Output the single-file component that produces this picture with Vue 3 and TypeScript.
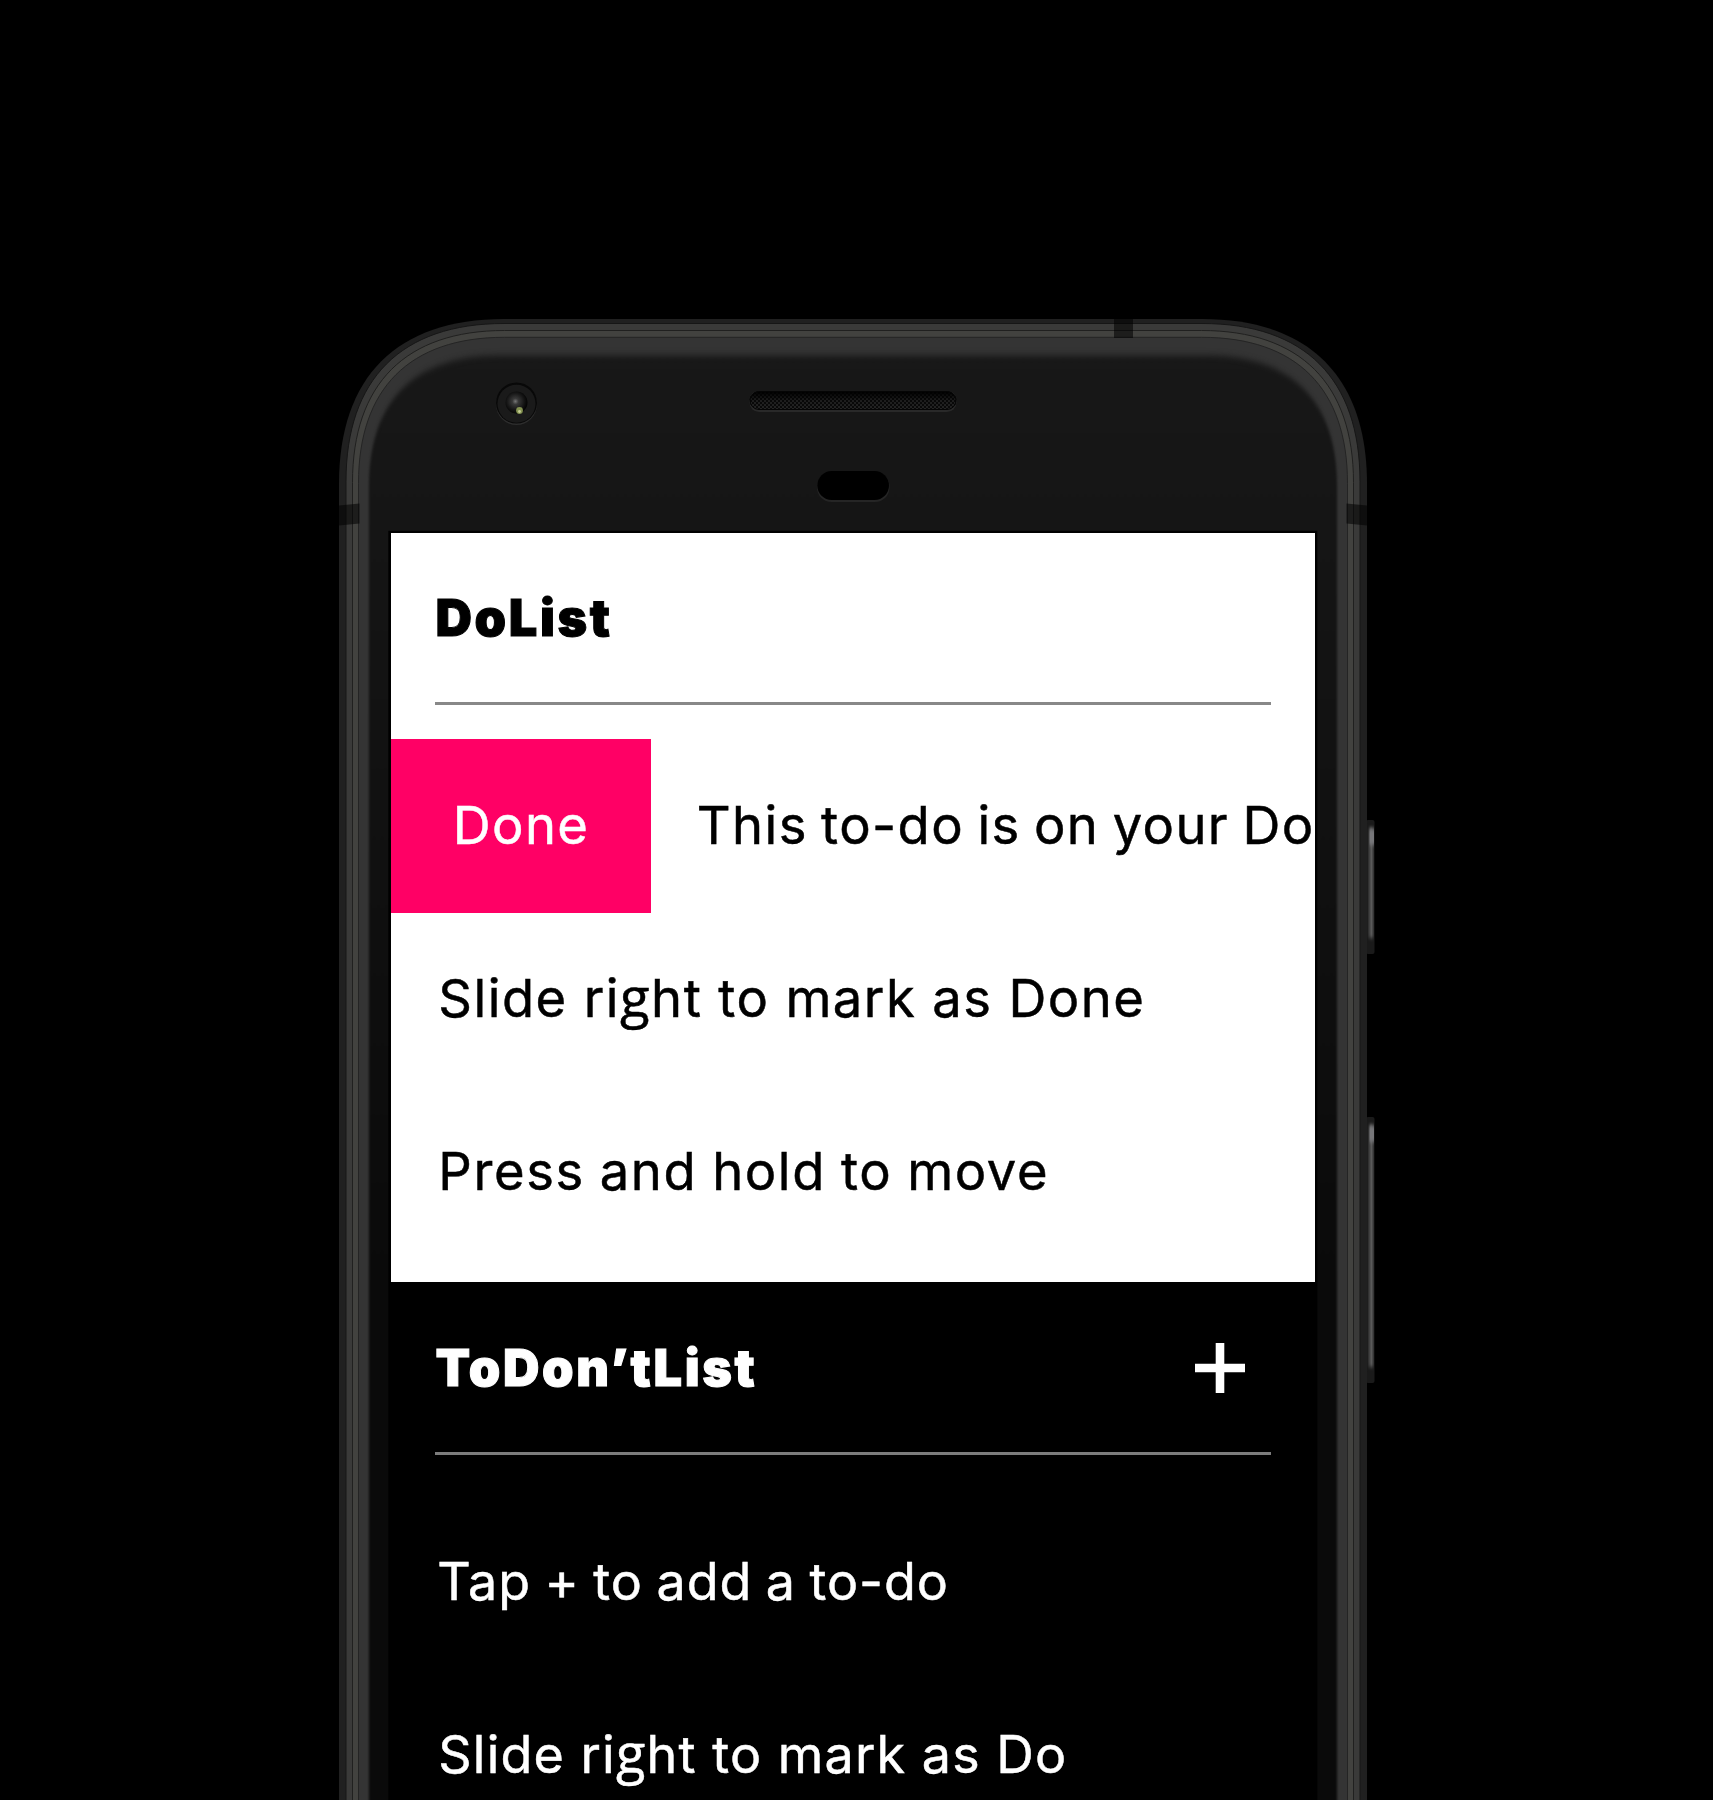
<script setup lang="ts">
interface Todo {
  text: string
  spacing: number
  wordGap: number
  action?: string
}

const doItems: Todo[] = [
  { text: 'This to-do is on your Do', spacing: 1.4, wordGap: -2.8, action: 'Done' },
  { text: 'Slide right to mark as Done', spacing: 1.5, wordGap: -0.3 },
  { text: 'Press and hold to move', spacing: 1.6, wordGap: -1.4 },
]

const dontItems: Todo[] = [
  { text: 'Tap + to add a to-do', spacing: 1, wordGap: -2.2 },
  { text: 'Slide right to mark as Do', spacing: 1.2, wordGap: -0.3 },
]

// The two-storey g comes from a companion face, so lines are split around it.
const pieces = (text: string): string[] => text.split(/(g)/).filter(Boolean)

// Outline of the handset: continuous-curvature top corners, sides running off the page.
const shell = (left: number, top: number, a: number): string => {
  const right = 1706 - left
  const c = a * 0.35
  return `M${left} 1900V${top + a}C${left} ${top + c} ${left + c} ${top} ${left + a} ${top}H${right - a}C${right - c} ${top} ${right} ${top + c} ${right} ${top + a}V1900Z`
}
</script>

<template>
  <main class="stage">
    <svg class="device" width="1713" height="1800" viewBox="0 0 1713 1800" aria-hidden="true">
      <defs>
        <linearGradient id="glass" x1="0" y1="350" x2="0" y2="1300" gradientUnits="userSpaceOnUse">
          <stop offset="0" stop-color="#181818" />
          <stop offset="0.2" stop-color="#151515" />
          <stop offset="1" stop-color="#0a0a0a" />
        </linearGradient>
        <linearGradient id="key" x1="0" x2="1" y1="0" y2="0">
          <stop offset="0" stop-color="#222" />
          <stop offset="0.6" stop-color="#5c5c5c" />
          <stop offset="1" stop-color="#2c2c2c" />
        </linearGradient>
        <radialGradient id="lens" cx="0.45" cy="0.45" r="0.55">
          <stop offset="0" stop-color="#777" />
          <stop offset="0.25" stop-color="#383838" />
          <stop offset="0.7" stop-color="#161616" />
          <stop offset="1" stop-color="#030303" />
        </radialGradient>
        <linearGradient id="slot" x1="0" y1="0" x2="0" y2="1">
          <stop offset="0" stop-color="#000" />
          <stop offset="0.5" stop-color="#000" stop-opacity="0.3" />
          <stop offset="1" stop-color="#000" stop-opacity="0.1" />
        </linearGradient>
        <pattern id="mesh" width="4" height="4" patternUnits="userSpaceOnUse">
          <rect width="4" height="4" fill="#0b0b0b" />
          <rect width="2" height="2" fill="#292929" />
          <rect x="2" y="2" width="2" height="2" fill="#292929" />
        </pattern>
        <filter id="soft" color-interpolation-filters="sRGB" x="-5%" y="-5%" width="110%" height="110%"><feGaussianBlur stdDeviation="1.2 3" /></filter>
        <filter id="fine" color-interpolation-filters="sRGB" x="-50%" y="-20%" width="200%" height="140%"><feGaussianBlur stdDeviation="0.5 2" /></filter>
      </defs>

      <g v-for="k in [{ y: 820, h: 134 }, { y: 1117, h: 266 }]" :key="k.y">
        <rect x="1366" :y="k.y" width="8.5" :height="k.h" rx="2" fill="#1a1a1a" />
        <rect x="1367.5" :y="k.y + 8" width="6.5" :height="k.h - 24" fill="url(#key)" filter="url(#fine)" />
        <rect x="1369.5" :y="k.y + 9" width="4.5" height="16" fill="#77777a" filter="url(#fine)" />
      </g>

      <path :d="shell(339, 319, 165)" fill="#202020" />
      <path :d="shell(346, 323.5, 158)" fill="#3a3a39" stroke="#161616" />
      <path :d="shell(352.5, 330.5, 152)" fill="#42423f" stroke="#20201f" />
      <path :d="shell(358.5, 337.3, 146)" fill="#343434" stroke="#242424" />
      <path :d="shell(369, 355.5, 130)" fill="url(#glass)" filter="url(#soft)" />
      <g fill="#000" fill-opacity="0.55">
        <rect x="1114" y="319" width="19" height="19" />
        <path d="M339 505.5L359.5 503.5V523.5L339 525.5Z" />
        <path d="M1367 505.5L1346.5 503.5V523.5L1367 525.5Z" />
      </g>

      <circle cx="516.5" cy="404.5" r="20.5" fill="#2d2d2d" />
      <circle cx="516.5" cy="403" r="20.5" fill="#080808" />
      <circle cx="516.5" cy="403.8" r="19" fill="#1a1a1a" />
      <circle cx="516.5" cy="402.5" r="11" fill="url(#lens)" />
      <circle cx="519.5" cy="410.5" r="3.4" fill="#829050" />
      <circle cx="519.5" cy="411.5" r="1.4" fill="#c6cf95" />

      <rect x="749.5" y="392.5" width="207" height="19.5" rx="9.7" fill="#292929" />
      <rect x="749.5" y="391" width="207" height="18.5" rx="9.2" fill="url(#mesh)" />
      <rect x="750" y="391.5" width="206" height="18" rx="9" fill="url(#slot)" stroke="#050505" />
      <rect x="817" y="472" width="72.5" height="30" rx="14.5" fill="#252525" />
      <rect x="817.3" y="471" width="71.7" height="29" rx="14.5" fill="#000" />
      <rect x="388.3" y="530.8" width="929" height="1300" fill="#000" />
    </svg>

    <div class="screen">
      <section class="panel light">
        <header class="bar"><h1 class="title">DoList</h1></header>
        <ul class="rows">
          <li v-for="item in doItems" :key="item.text" class="row">
            <button v-if="item.action" class="action">{{ item.action }}</button>
            <span
              class="label"
              :style="{ letterSpacing: item.spacing + 'px', wordSpacing: item.wordGap + 'px' }"
            ><span v-for="(p, i) in pieces(item.text)" :key="i" :class="{ gee: p === 'g' }">{{ p }}</span></span>
          </li>
        </ul>
      </section>
      <section class="panel dark">
        <header class="bar">
          <h1 class="title">ToDon’tList</h1>
          <button class="add" aria-label="Add">
            <svg width="52" height="52" viewBox="0 0 52 52">
              <path d="M1 26H51M26 1V51" stroke="#fff" stroke-width="8.6" />
            </svg>
          </button>
        </header>
        <ul class="rows">
          <li v-for="item in dontItems" :key="item.text" class="row">
            <span
              class="label"
              :style="{ letterSpacing: item.spacing + 'px', wordSpacing: item.wordGap + 'px' }"
            ><span v-for="(p, i) in pieces(item.text)" :key="i" :class="{ gee: p === 'g' }">{{ p }}</span></span>
          </li>
        </ul>
      </section>
    </div>
  </main>
</template>

<style>
html,
body {
  background: #000;
}
</style>

<style scoped>
.stage {
  position: relative;
  box-sizing: border-box;
  width: 1713px;
  height: 1800px;
  padding: 532.5px 0 0 391.3px;
  overflow: hidden;
  background: #000;
  font-family: Inter, Roboto, sans-serif;
}
.device {
  position: absolute;
  inset: 0;
}
.screen {
  position: relative;
  width: 923.5px;
  overflow: hidden;
}
.panel {
  box-sizing: border-box;
}
.light {
  height: 749.9px;
  background: #fff;
  color: #000;
}
.dark {
  height: 760px;
  background: #000;
  color: #fff;
}
.bar {
  box-sizing: border-box;
  display: flex;
  align-items: center;
  justify-content: space-between;
  height: 172.3px;
  margin: 0 43.7px;
  padding: 1px 25px 0 0.5px;
  border-bottom: 3px solid #888;
}
.dark .bar {
  border-bottom-color: #7c7c7c;
}
.title {
  margin: 0;
  padding-top: 1px;
  font-size: 50.5px;
  line-height: 60px;
  font-weight: 900;
  letter-spacing: 2.6px;
  -webkit-text-stroke: 1px currentColor;
}
.rows {
  margin: 0;
  padding: 34.7px 0 0;
  list-style: none;
}
.dark .rows {
  padding-top: 41px;
}
.row {
  display: flex;
  align-items: center;
  height: 173.2px;
  white-space: nowrap;
  font-size: 52.5px;
  font-weight: 400;
  -webkit-text-stroke: 0.5px currentColor;
}
.dark .row {
  font-size: 52px;
}
.action {
  flex: none;
  width: 259.5px;
  height: 173.2px;
  padding: 0 0 2px;
  border: 0;
  background: #ff0065;
  color: #fff;
  font: inherit;
  letter-spacing: 1.4px;
}
.label {
  padding: 0 0 2px 47px;
}
.row:first-child .label {
  padding-left: 46px;
}
.gee {
  font-family: 'Open Sans', sans-serif;
  font-size: 1.04em;
  line-height: 0;
}
.add {
  display: flex;
  padding: 0;
  border: 0;
  background: none;
}
</style>
